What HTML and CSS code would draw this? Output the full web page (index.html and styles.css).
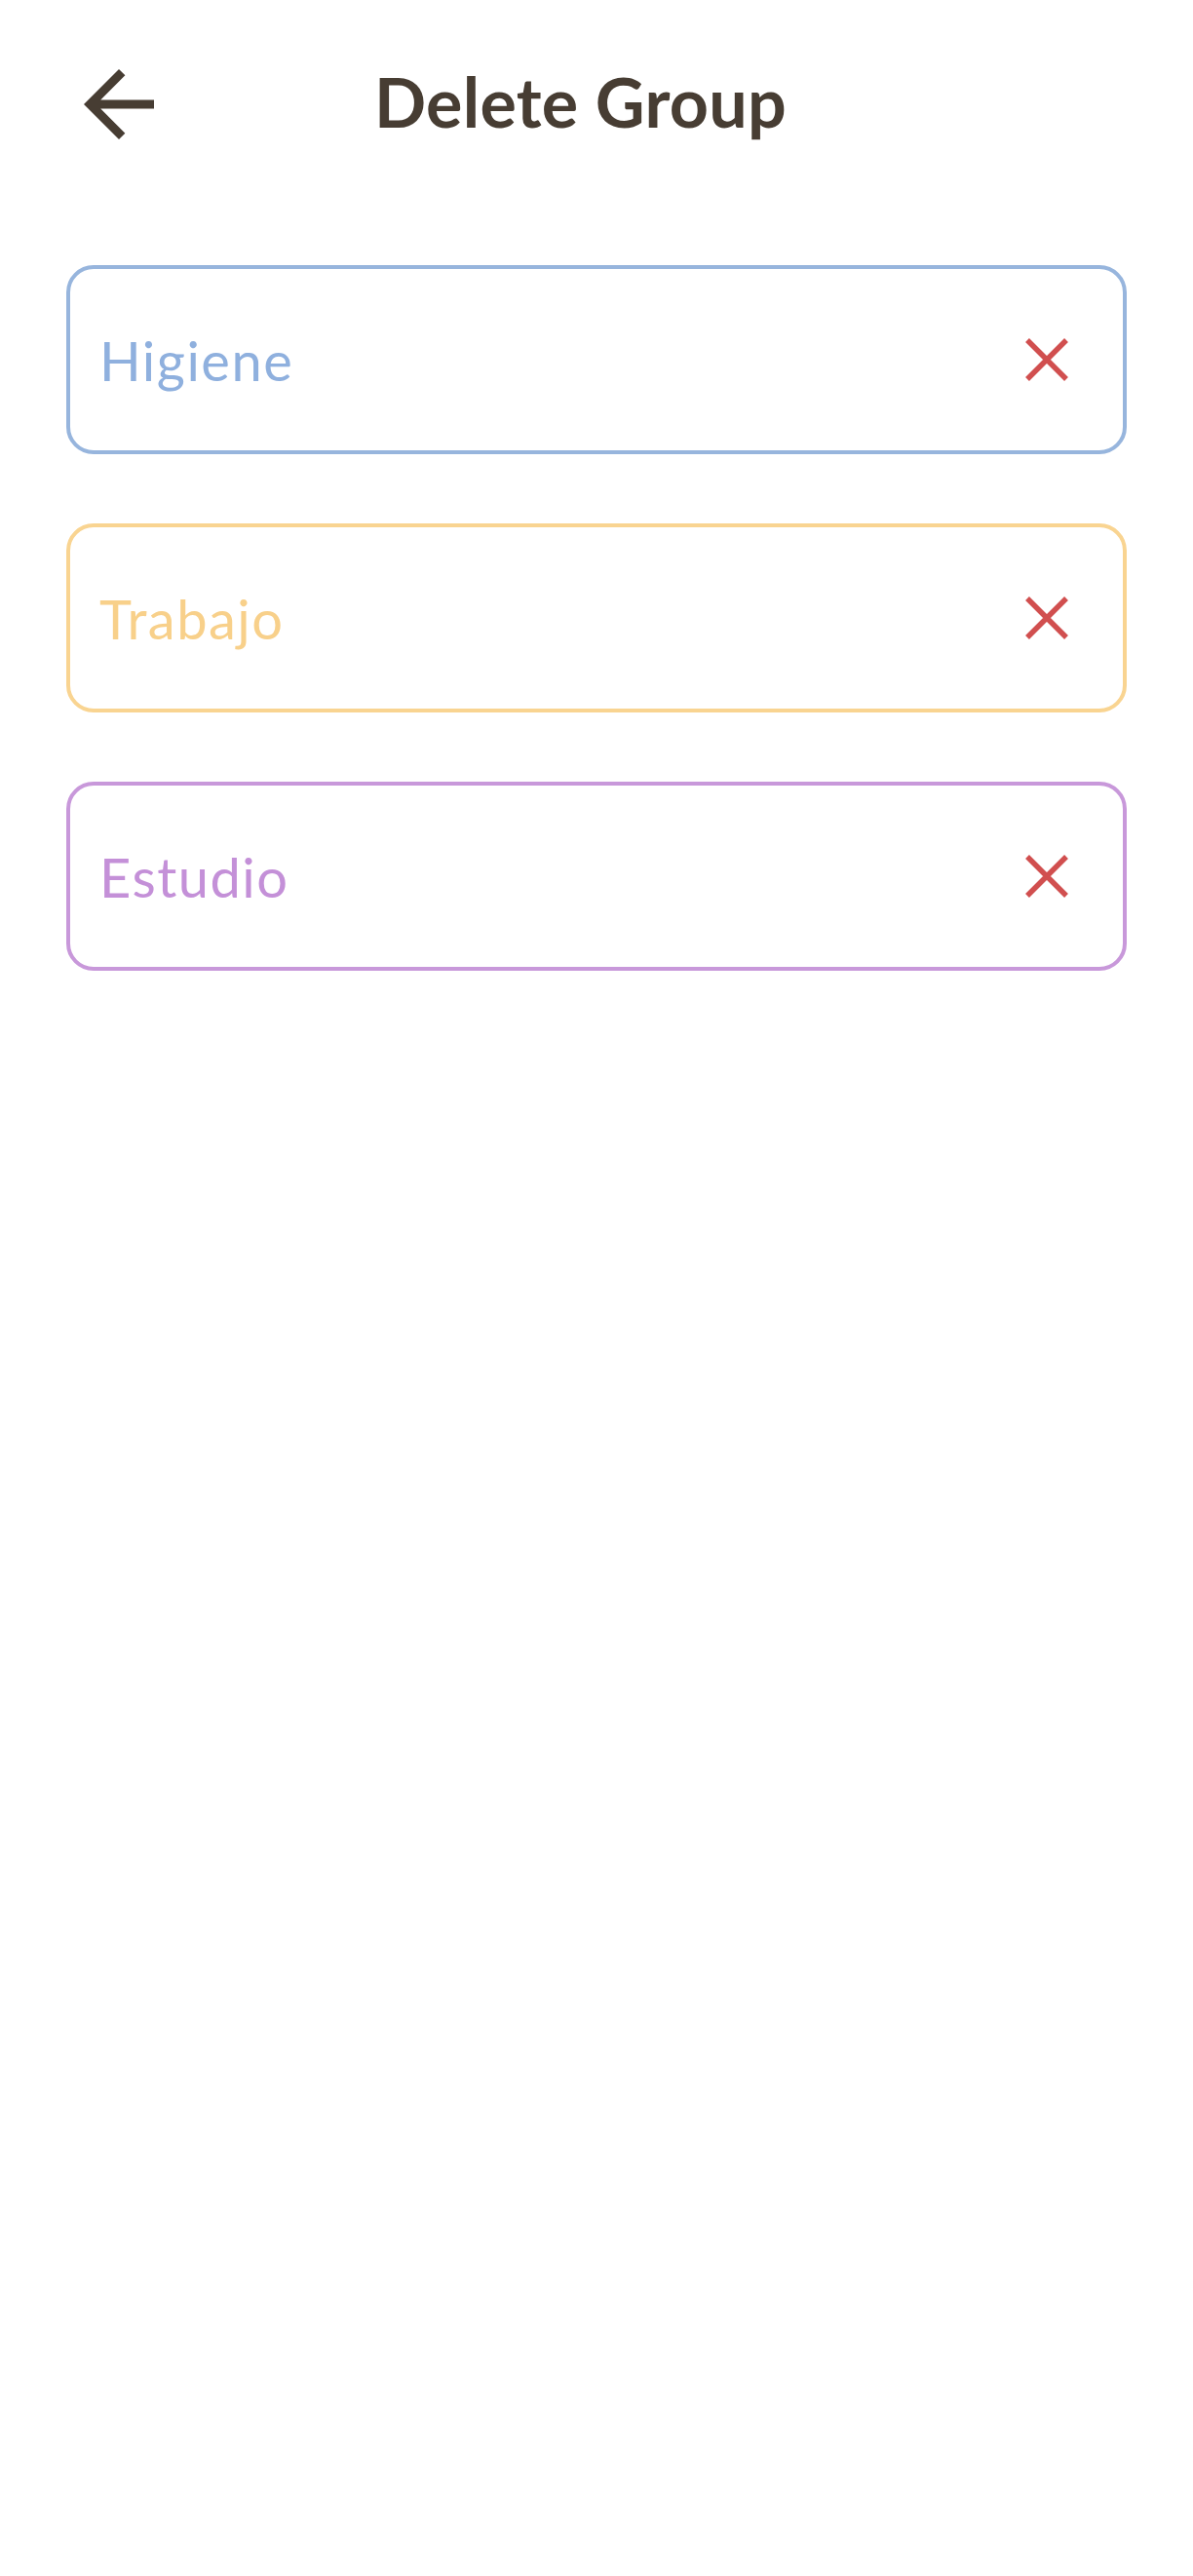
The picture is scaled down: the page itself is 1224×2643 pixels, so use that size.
FILE: index.html
```html
<!DOCTYPE html>
<html lang="en">
<head>
<meta charset="utf-8">
<title>Delete Group</title>
<link rel="stylesheet" href="styles.css">
</head>
<body>
<div class="screen">
  <header class="header">
    <svg class="back" viewBox="0 0 24 24" aria-hidden="true"><path d="M20 11H7.83l5.59-5.59L12 4l-8 8 8 8 1.41-1.41L7.83 13H20v-2z"/></svg>
    <h1 class="title">Delete Group</h1>
  </header>
  <main class="list">
    <div class="card card-blue">
      <span class="name">Higiene</span>
      <svg class="del" viewBox="0 0 48 48" aria-hidden="true"><path d="M4 4L44 44M44 4L4 44"/></svg>
    </div>
    <div class="card card-orange">
      <span class="name">Trabajo</span>
      <svg class="del" viewBox="0 0 48 48" aria-hidden="true"><path d="M4 4L44 44M44 4L4 44"/></svg>
    </div>
    <div class="card card-purple">
      <span class="name">Estudio</span>
      <svg class="del" viewBox="0 0 48 48" aria-hidden="true"><path d="M4 4L44 44M44 4L4 44"/></svg>
    </div>
  </main>
</div>
</body>
</html>
```

FILE: styles.css
```css
html, body {
  margin: 0;
  padding: 0;
  background: #ffffff;
}
body {
  font-family: Lato, "Noto Sans", "Liberation Sans", sans-serif;
  width: 1224px;
  min-height: 2643px;
}
.header {
  display: flex;
  align-items: center;
  height: 108px;
  padding: 53px 0 0 68px;
}
.back {
  width: 108px;
  height: 108px;
  fill: #473d33;
  flex: none;
}
.title {
  margin: 0 0 6px 208px;
  font-size: 70px;
  font-weight: 700;
  color: #473d33;
  letter-spacing: 0.3px;
}
.list {
  display: flex;
  flex-direction: column;
  gap: 71px;
  margin-top: 111px;
  padding: 0 68px;
}
.card {
  box-sizing: border-box;
  height: 194px;
  border: 4px solid;
  border-radius: 28px;
  display: flex;
  align-items: center;
  justify-content: space-between;
  padding: 0 54px 0 30px;
}
.name {
  font-size: 56px;
  font-weight: 400;
  letter-spacing: 1.5px;
}
.card-blue { border-color: #97b5dd; color: #8fb0de; }
.card-orange { border-color: #f9d491; color: #f8d08a; }
.card-purple { border-color: #c898da; color: #c490d8; }
.del {
  width: 48px;
  height: 48px;
  fill: none;
  stroke: #d14f4f;
  stroke-width: 5.5;
  flex: none;
}
```
